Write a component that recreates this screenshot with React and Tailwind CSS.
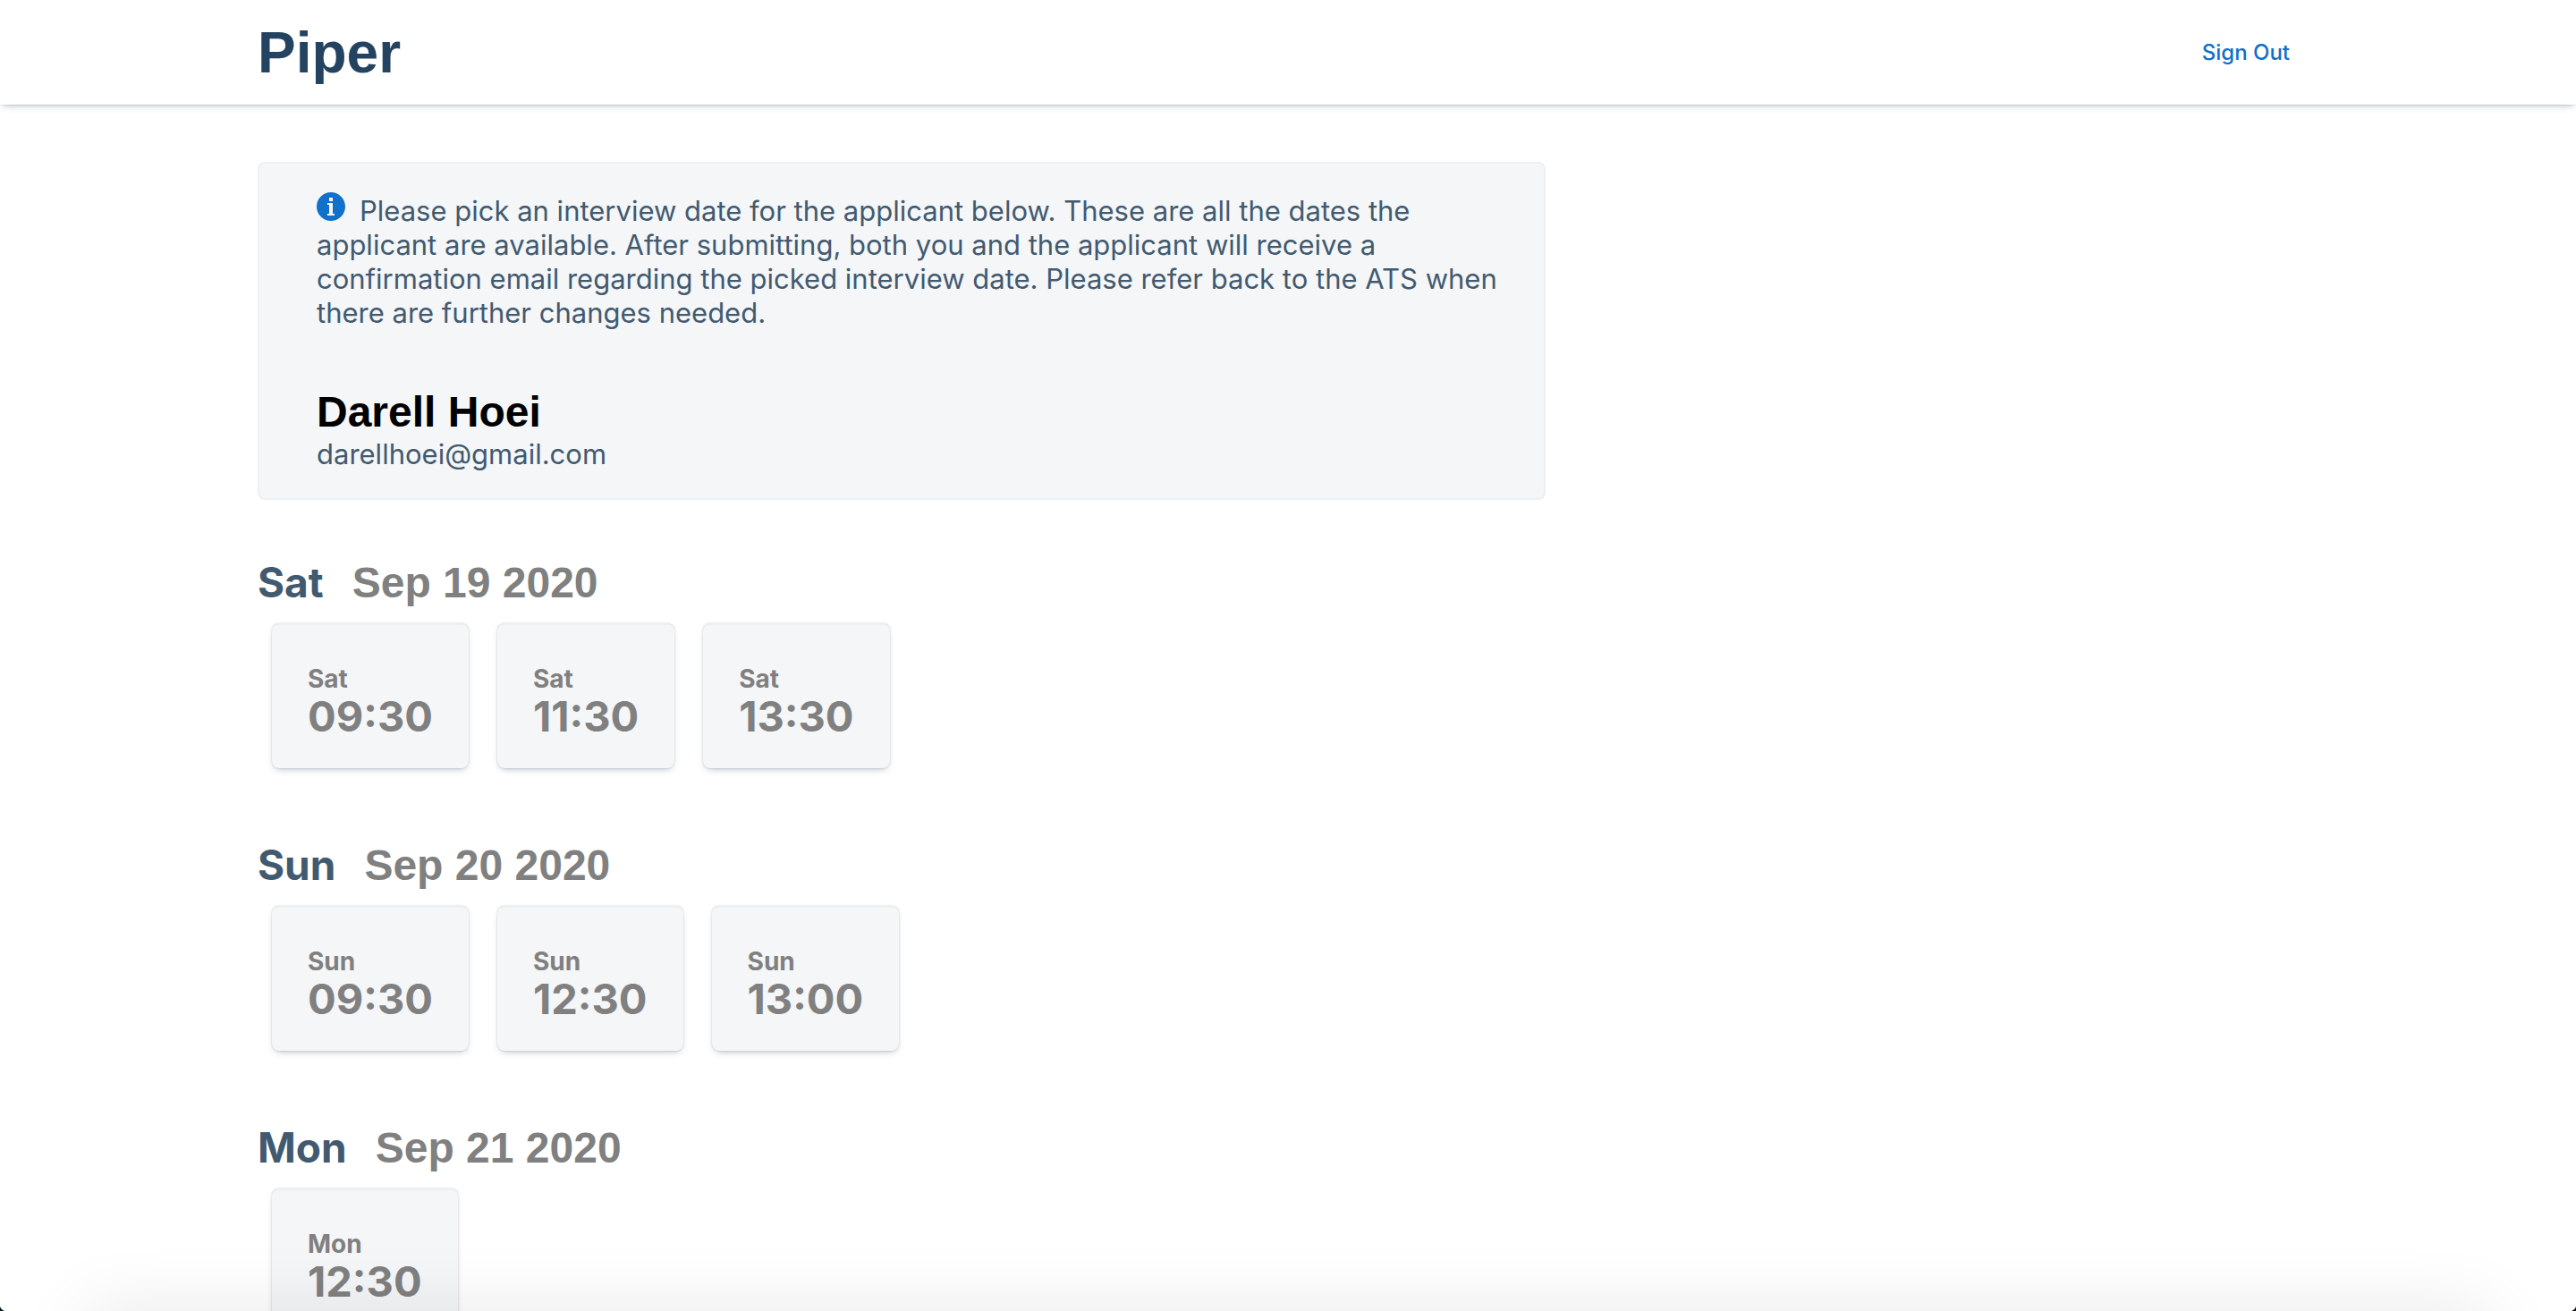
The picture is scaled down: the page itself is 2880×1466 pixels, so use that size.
const days = [
  { day: 'Sat', date: 'Sep 19 2020', slots: ['09:30', '11:30', '13:30'] },
  { day: 'Sun', date: 'Sep 20 2020', slots: ['09:30', '12:30', '13:00'] },
  { day: 'Mon', date: 'Sep 21 2020', slots: ['12:30'] },
];

function InfoIcon() {
  return (
    <svg viewBox="0 0 16 16" aria-hidden="true" className="mr-4 inline-block size-8 align-baseline text-[#1070ca]">
      <path
        fill="currentColor"
        fillRule="evenodd"
        d="M8 0C3.58 0 0 3.58 0 8s3.58 8 8 8 8-3.58 8-8-3.58-8-8-8zM7 3h2v2H7V3zm3 10H6v-1h1V7H6V6h3v6h1v1z"
      />
    </svg>
  );
}

function Header() {
  return (
    <header className="bg-white shadow-[0_0_2px_rgba(67,90,111,0.3),0_4px_8px_-4px_rgba(67,90,111,0.47)]">
      <div className="mx-auto flex h-[117px] w-4/5 items-center justify-between pr-8">
        <h1 className="font-['Liberation_Sans',sans-serif] text-[64px] leading-[72px] font-bold text-[#234361]">Piper</h1>
        <button type="button" className="text-2xl font-medium text-[#1070ca]">Sign Out</button>
      </div>
    </header>
  );
}

function ApplicantCard() {
  return (
    <section className="w-5/8 rounded-[8px] border-2 border-[#edf0f2] bg-[#f5f6f8] pt-8 pr-10 pb-[30px] pl-16">
      <p className="text-[31px] leading-[38px]">
        <InfoIcon />
        Please pick an interview date for the applicant below. These are all the dates the applicant are available.
        After submitting, both you and the applicant will receive a confirmation email regarding the picked interview
        date. Please refer back to the ATS when there are further changes needed.
      </p>
      <h2 className="mt-16 font-['Liberation_Sans',sans-serif] text-5xl leading-[56px] font-bold text-black">Darell Hoei</h2>
      <p className="text-[31px] leading-[38px]">darellhoei@gmail.com</p>
    </section>
  );
}

function DaySection({ day, date, slots }) {
  return (
    <section className="mb-16">
      <h2 className="flex items-baseline gap-8 text-[46px] leading-[56px] font-bold">
        {day}
        <span className="font-['Liberation_Sans',sans-serif] text-5xl text-[#808080]">{date}</span>
      </h2>
      <div className="flex gap-8 px-4 pt-[18px] pb-4">
        {slots.map((time) => (
          <button
            key={time}
            type="button"
            className="rounded-[8px] border-t-2 border-[#edf0f2] bg-[#f5f6f8] px-10 pt-11 pb-8 text-left font-bold text-[#808080] shadow-[0_0_2px_rgba(67,90,111,0.3),0_4px_8px_-4px_rgba(67,90,111,0.47)]"
          >
            <span className="block text-[28px] leading-8">{day}</span>
            <span className="block text-[47px] leading-[52px]">{time}</span>
          </button>
        ))}
      </div>
    </section>
  );
}

export default function App() {
  return (
    <div className="h-screen overflow-hidden bg-white font-['Inter',sans-serif] text-[#425a70]">
      <Header />
      <main className="mx-auto w-4/5 pt-16">
        <ApplicantCard />
        <div className="mt-16">
          {days.map((d) => (
            <DaySection key={d.day} {...d} />
          ))}
        </div>
      </main>
      <div className="pointer-events-none fixed inset-x-0 bottom-0 h-20 overflow-hidden">
        <div className="absolute inset-x-24 top-full h-16 shadow-[0_0_80px_rgba(0,0,0,0.1)]" />
        <div className="absolute bottom-0 left-0 size-2 bg-[radial-gradient(circle_at_top_right,transparent_8px,#0b1a22_9px)]" />
        <div className="absolute right-0 bottom-0 size-2 bg-[radial-gradient(circle_at_top_left,transparent_8px,#0b1a22_9px)]" />
      </div>
    </div>
  );
}
